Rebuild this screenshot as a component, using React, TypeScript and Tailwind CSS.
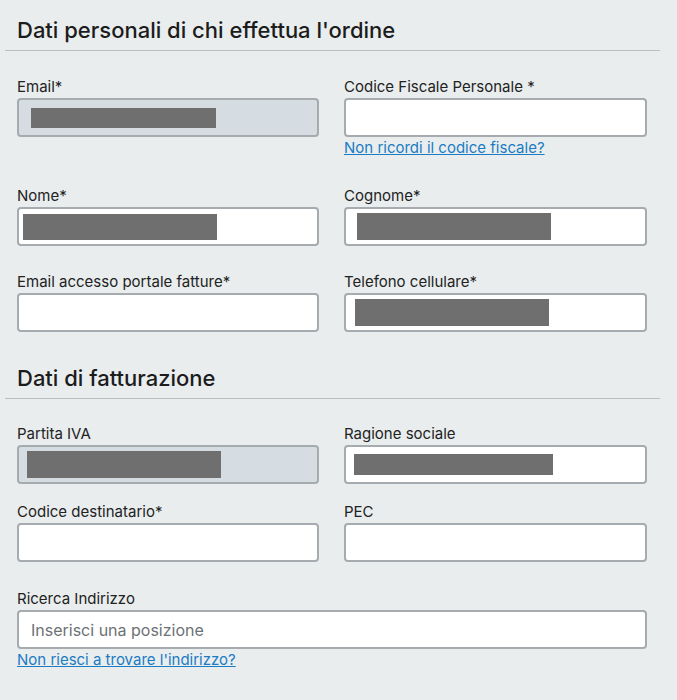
const Redact = ({ w, h }: { w: number; h: number }) => (
  <div className="bg-[#6f6f6f]" style={{ width: w, height: h }} />
);

function Field({
  label,
  disabled,
  children,
  link,
  className = "",
}: {
  label: string;
  disabled?: boolean;
  children?: React.ReactNode;
  link?: string;
  className?: string;
}) {
  return (
    <div className={className}>
      <div className="text-[15px] leading-[21px] text-[#222]">{label}</div>
      <div
        className={`mt-[1px] h-[39px] rounded-[4px] border-2 border-[#a6abaf] flex items-center ${
          disabled ? "bg-[#d5dce2]" : "bg-white"
        }`}
      >
        {children}
      </div>
      {link && (
        <a href="#" className="block mt-[2px] text-[15px] leading-[18px] text-[#1b7cc3] underline">
          {link}
        </a>
      )}
    </div>
  );
}

function SectionTitle({ children }: { children: React.ReactNode }) {
  return (
    <div className="mx-[5px] w-[655px] border-b border-[#b9bec2] pl-[12px] pb-[6px]">
      <h2 className="text-[22px] leading-[28px] font-medium text-[#1c1c1c]">{children}</h2>
    </div>
  );
}

export default function App() {
  return (
    <div
      className="w-[677px] h-[700px] bg-[#e9edee] pt-[16px] overflow-hidden"
      style={{ fontFamily: "Inter, 'Noto Sans', sans-serif" }}
    >
      <SectionTitle>Dati personali di chi effettua l'ordine</SectionTitle>

      <div className="ml-[17px] w-[630px] grid grid-cols-[302px_303px] gap-x-[25px] mt-[25px]">
        <Field label="Email*" disabled>
          <div className="ml-[12px]">
            <Redact w={185} h={20} />
          </div>
        </Field>
        <Field label="Codice Fiscale Personale *" link="Non ricordi il codice fiscale?" />

        <Field label="Nome*" className="mt-[28px]">
          <div className="ml-[4px]">
            <Redact w={194} h={26} />
          </div>
        </Field>
        <Field label="Cognome*" className="mt-[28px]">
          <div className="ml-[11px]">
            <Redact w={194} h={27} />
          </div>
        </Field>

        <Field label="Email accesso portale fatture*" className="mt-[25px]" />
        <Field label="Telefono cellulare*" className="mt-[25px]">
          <div className="ml-[9px]">
            <Redact w={194} h={27} />
          </div>
        </Field>
      </div>

      <div className="mt-[32px]">
        <SectionTitle>Dati di fatturazione</SectionTitle>
      </div>

      <div className="ml-[17px] w-[630px] grid grid-cols-[302px_303px] gap-x-[25px] mt-[24px]">
        <Field label="Partita IVA" disabled>
          <div className="ml-[8px]">
            <Redact w={194} h={27} />
          </div>
        </Field>
        <Field label="Ragione sociale">
          <div className="ml-[8px]">
            <Redact w={199} h={21} />
          </div>
        </Field>

        <Field label="Codice destinatario*" className="mt-[17px]" />
        <Field label="PEC" className="mt-[17px]" />

        <Field
          label="Ricerca Indirizzo"
          className="col-span-2 mt-[26px]"
          link="Non riesci a trovare l'indirizzo?"
        >
          <span className="ml-[12px] text-[16px] text-[#6d7175]">Inserisci una posizione</span>
        </Field>
      </div>
    </div>
  );
}
